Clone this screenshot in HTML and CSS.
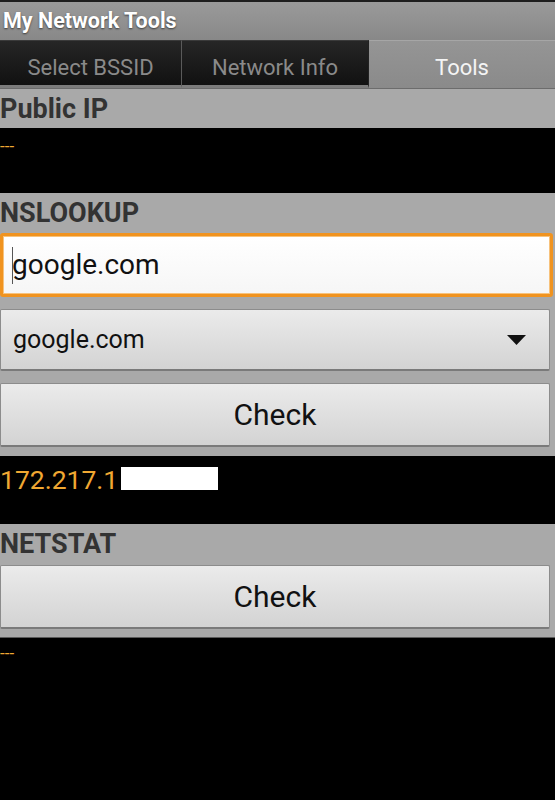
FILE: index.html
```html
<!DOCTYPE html>
<html lang="en">
<head>
    <meta charset="UTF-8">
    <meta name="viewport" content="width=device-width, initial-scale=1.0">
    <title>My Network Tools</title>
    <link rel="stylesheet" href="styles.css">
</head>
<body>

    <div class="mnt-screen">
        <div class="mnt-titlebar">My Network Tools</div>

        <div class="mnt-tabs">
            <div class="mnt-tab mnt-tab-first">Select BSSID</div>
            <div class="mnt-tab mnt-tab-second">Network Info</div>
            <div class="mnt-tab mnt-tab-active">Tools</div>
        </div>

        <div class="mnt-section-title">Public IP</div>
        <div class="mnt-output mnt-output-ip">---</div>

        <div class="mnt-section-title">NSLOOKUP</div>
        <div class="mnt-form">
            <div class="mnt-input">
                <span class="mnt-cursor"></span>google.com
            </div>
            <div class="mnt-spinner">
                <span>google.com</span>
                <svg class="mnt-arrow" width="19" height="10" viewBox="0 0 19 10">
                    <polygon points="0,0 19,0 9.5,10" fill="#111"/>
                </svg>
            </div>
            <button class="mnt-btn">Check</button>
        </div>
        <div class="mnt-output mnt-output-lookup">
            <span>172.217.1</span><span class="mnt-redact"></span>
        </div>

        <div class="mnt-section-title">NETSTAT</div>
        <div class="mnt-form mnt-form-netstat">
            <button class="mnt-btn">Check</button>
        </div>
        <div class="mnt-output mnt-output-netstat">---</div>
    </div>

</body>
</html>
```

FILE: styles.css
```css
:root {
    --panel-color: #a9a9a9;
    --heading-color: #333333;
    --orange-color: #f0a832;
    --button-border: #8c8c8c;
}

body {
    margin: 0;
    padding: 0;
    background-color: #000;
    font-family: Roboto, "Liberation Sans", sans-serif;
}

.mnt-screen {
    display: flex;
    flex-direction: column;
    min-height: 100vh;
    width: 555px;
    background-color: var(--panel-color);
}

.mnt-titlebar {
    height: 38px;
    border-top: 2px solid #1e1e1e;
    background: linear-gradient(#9a9a9a, #888888);
    color: #fff;
    font-size: 21.5px;
    font-weight: bold;
    line-height: 38px;
    padding-left: 3px;
    text-shadow: 0 1px 2px rgba(0, 0, 0, 0.6);
}

.mnt-tabs {
    display: flex;
    height: 48px;
    border-bottom: 1px solid #6c6c6c;
}

.mnt-tab {
    display: flex;
    align-items: center;
    justify-content: center;
    font-size: 22px;
    color: #8a8a8a;
    box-sizing: border-box;
    background: linear-gradient(#262626, #111111);
    border-top: 1px solid #3a3a3a;
    border-bottom: 3px solid #7c7c7c;
    padding-top: 9px;
}

.mnt-tab-first {
    width: 182px;
    border-right: 1px solid #5a5a5a;
}

.mnt-tab-second {
    width: 187px;
    border-right: 1px solid #222;
}

.mnt-tab-active {
    flex: 1;
    background: linear-gradient(#959595, #8a8a8a);
    border-top: 1px solid #a6a6a6;
    border-bottom: none;
    color: #f4f4f4;
    padding-top: 6px;
}

.mnt-section-title {
    height: 39px;
    line-height: 40px;
    font-size: 27px;
    font-weight: bold;
    color: var(--heading-color);
}

.mnt-output {
    background-color: #000;
    color: var(--orange-color);
    box-sizing: border-box;
}

.mnt-output-ip {
    height: 65px;
    font-size: 17px;
    line-height: 19px;
    padding-top: 9px;
}

.mnt-form {
    display: flex;
    flex-direction: column;
    gap: 12px;
    padding: 1px 5px 9px 0;
}

.mnt-form-netstat {
    padding: 2px 5px 8px 0;
    border-bottom: 1px solid #5a5a5a;
}

.mnt-input {
    height: 64px;
    margin-right: -3px;
    box-sizing: border-box;
    border: 3px solid #f0931f;
    border-radius: 3px;
    background: linear-gradient(#ffffff, #f6f6f6);
    box-shadow: inset 0 0 0 1px #f7c27c;
    font-size: 28px;
    line-height: 56px;
    padding-left: 9px;
    color: #111;
    display: flex;
    align-items: center;
}

.mnt-cursor {
    display: inline-block;
    width: 1px;
    height: 37px;
    background-color: #555;
    margin-right: -1px;
}

.mnt-spinner {
    height: 62px;
    box-sizing: border-box;
    display: flex;
    align-items: center;
    justify-content: space-between;
    padding: 0 23px 0 12px;
    font-size: 25px;
    color: #111;
    background: linear-gradient(#ebebeb, #d3d3d3);
    border: 1px solid var(--button-border);
    border-bottom: 2px solid #7a7a7a;
    border-radius: 2px;
}

.mnt-btn {
    height: 64px;
    font-family: Roboto, "Liberation Sans", sans-serif;
    font-size: 30px;
    color: #111;
    background: linear-gradient(#ebebeb, #d3d3d3);
    border: 1px solid var(--button-border);
    border-bottom: 2px solid #7a7a7a;
    border-radius: 2px;
    padding: 0;
}

.mnt-output-lookup {
    height: 68px;
    display: flex;
    align-items: flex-start;
    padding-top: 8px;
    font-size: 26.5px;
    line-height: 32px;
}

.mnt-redact {
    display: inline-block;
    width: 97px;
    height: 23px;
    margin-top: 3px;
    margin-left: 3px;
    background-color: #fff;
}

.mnt-output-netstat {
    flex: 1;
    font-size: 17px;
    line-height: 19px;
    padding-top: 6px;
}
```
